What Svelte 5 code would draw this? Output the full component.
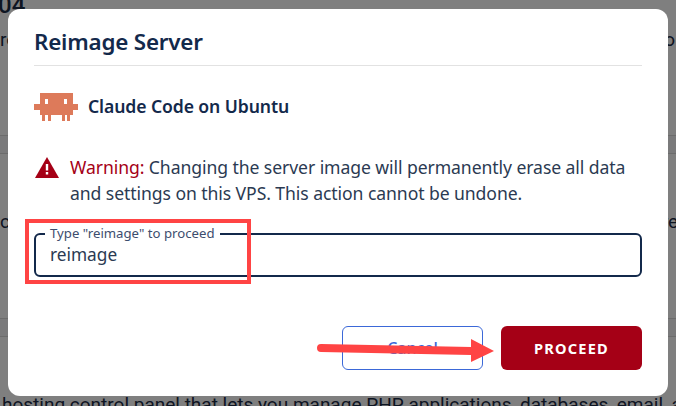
<script lang="ts">
  let confirmText = $state('reimage');
</script>

<div class="page">
  <h2 class="page-title">04</h2>
  <p class="page-line first">ro an Ubuntu server image with a ready to use developer environment and all tools to let</p>
  <div class="rule-band"></div>
  <p class="page-line middle">c Configure the application from the control panel as the server is up, for every reg</p>
  <div class="rule-band lower"></div>
  <p class="page-line last">hosting control panel that lets you manage PHP applications, databases, email, and</p>
</div>

<div class="backdrop">
  <div class="modal" role="dialog" aria-modal="true" aria-labelledby="modal-title">
    <h3 id="modal-title" class="modal-title">Reimage Server</h3>

    <div class="image-row">
      <svg class="mascot" width="44" height="28" viewBox="0 0 44 28" shape-rendering="crispEdges">
        <path fill="#dd7a5a" d="M6 0h33v11h5v6h-5v5h-3v6h-3v-6h-2v6h-3v-6H17v6h-3v-6h-3v6H8v-6H6v-5H0v-6h6z" />
        <rect x="11" y="6" width="3" height="5" fill="#fff" />
        <rect x="30" y="6" width="3" height="5" fill="#fff" />
      </svg>
      <span class="image-name">Claude Code on Ubuntu</span>
    </div>

    <div class="warning">
      <svg class="warning-icon" width="24" height="21" viewBox="0 0 24 21">
        <path fill="#a50016" d="M12 0 24 21H0z" />
        <rect x="10.800" y="7" width="2.400" height="6.500" fill="#fff" />
        <rect x="10.800" y="15" width="2.400" height="2.500" fill="#fff" />
      </svg>
      <p class="warning-text">
        <span class="warning-label">Warning:</span> Changing the server image will permanently erase all data and settings on this VPS. This action cannot be undone.
      </p>
    </div>

    <fieldset class="field">
      <legend>Type "reimage" to proceed</legend>
      <input type="text" bind:value={confirmText} />
    </fieldset>

    <div class="actions">
      <button class="btn-cancel">Cancel</button>
      <button class="btn-proceed">PROCEED</button>
    </div>
  </div>
</div>

<div class="callout-box"></div>
<svg class="callout-arrow" width="190" height="36" viewBox="0 0 190 36">
  <path fill="#ff4444" d="M6 6 156 9V1L179 13 156 24V17L6 14A4 4 0 0 1 6 6z" />
</svg>

<style>
  :global(body) {
    margin: 0;
    overflow: hidden;
  }

  .page {
    width: 676px;
    height: 406px;
    overflow: hidden;
    background: #fff;
    color: #1b2b45;
    font-family: Roboto, sans-serif;
    display: flex;
    flex-direction: column;
  }

  .page-title {
    margin: -9px 0 0 -2px;
    font-size: 24px;
    font-weight: 500;
    line-height: 28px;
  }

  .page-line {
    margin: 0;
    font-size: 19px;
    line-height: 20px;
    white-space: nowrap;
  }

  .page-line.first {
    margin-top: 11px;
  }

  .rule-band {
    flex: none;
    height: 17px;
    margin-top: 85px;
    background: #f4f4f6;
    border-top: 1px solid #d8d8d8;
    border-bottom: 1px solid #d8d8d8;
  }

  .page-line.middle {
    margin-top: 58px;
  }

  .rule-band.lower {
    margin-top: 86px;
  }

  .page-line.last {
    margin-top: 58px;
    margin-left: 2px;
  }

  .backdrop {
    position: fixed;
    inset: 0;
    background: rgba(0, 0, 0, 0.5);
    display: flex;
    align-items: flex-start;
    justify-content: center;
    padding-top: 9px;
  }

  .modal {
    box-sizing: border-box;
    width: 660px;
    height: 387px;
    padding: 17px 26px 26px;
    background: #fff;
    border-radius: 12px;
    display: flex;
    flex-direction: column;
    color: #1d2b44;
    font-family: "Noto Sans", sans-serif;
  }

  .modal-title {
    margin: 0;
    padding-bottom: 8px;
    font-size: 22.4px;
    font-weight: 600;
    letter-spacing: -0.2px;
    line-height: 31px;
    color: #13294b;
    border-bottom: 1px solid #e2e2e2;
  }

  .image-row {
    display: flex;
    align-items: center;
    gap: 10px;
    margin-top: 27px;
  }

  .mascot {
    display: block;
    flex: none;
  }

  .image-name {
    padding-bottom: 2px;
    font-size: 17.6px;
    font-weight: 600;
    letter-spacing: -0.1px;
    color: #13294b;
  }

  .warning {
    display: flex;
    gap: 11px;
    margin-top: 33px;
  }

  .warning-icon {
    flex: none;
    margin-top: 3px;
    margin-left: 1px;
  }

  .warning-text {
    margin: 0;
    font-size: 17.6px;
    letter-spacing: -0.08px;
    line-height: 26px;
    color: #2b3a52;
  }

  .warning-label {
    color: #a50016;
  }

  .field {
    box-sizing: border-box;
    height: 50px;
    margin: 21px 0 0;
    padding: 0 14px;
    border: 2px solid #13294b;
    border-radius: 6px;
    display: flex;
  }

  .field legend {
    padding: 0 5px;
    margin-left: -5px;
    font-size: 13.2px;
    line-height: 13px;
    color: #3d4d6e;
  }

  .field input {
    width: 100%;
    padding: 2px 0 0;
    border: none;
    outline: none;
    background: none;
    font: inherit;
    font-size: 17.28px;
    line-height: 26px;
    color: #2b3a52;
  }

  .actions {
    display: flex;
    justify-content: flex-end;
    gap: 18px;
    margin-top: auto;
  }

  .actions button {
    box-sizing: border-box;
    width: 141px;
    height: 44px;
    border-radius: 6px;
    font-family: inherit;
    cursor: pointer;
  }

  .btn-cancel {
    background: #fff;
    border: 1px solid #3b68d8;
    color: #3b68d8;
    font-size: 16px;
    font-weight: 500;
  }

  .btn-proceed {
    background: #a50016;
    border: none;
    color: #fff;
    font-size: 14.6px;
    font-weight: 700;
    letter-spacing: 0.08em;
  }

  .callout-box {
    position: fixed;
    left: 25px;
    top: 219px;
    width: 226px;
    height: 65px;
    box-sizing: border-box;
    border: 4px solid #ff4444;
  }

  .callout-arrow {
    position: fixed;
    left: 315px;
    top: 338px;
  }
</style>
